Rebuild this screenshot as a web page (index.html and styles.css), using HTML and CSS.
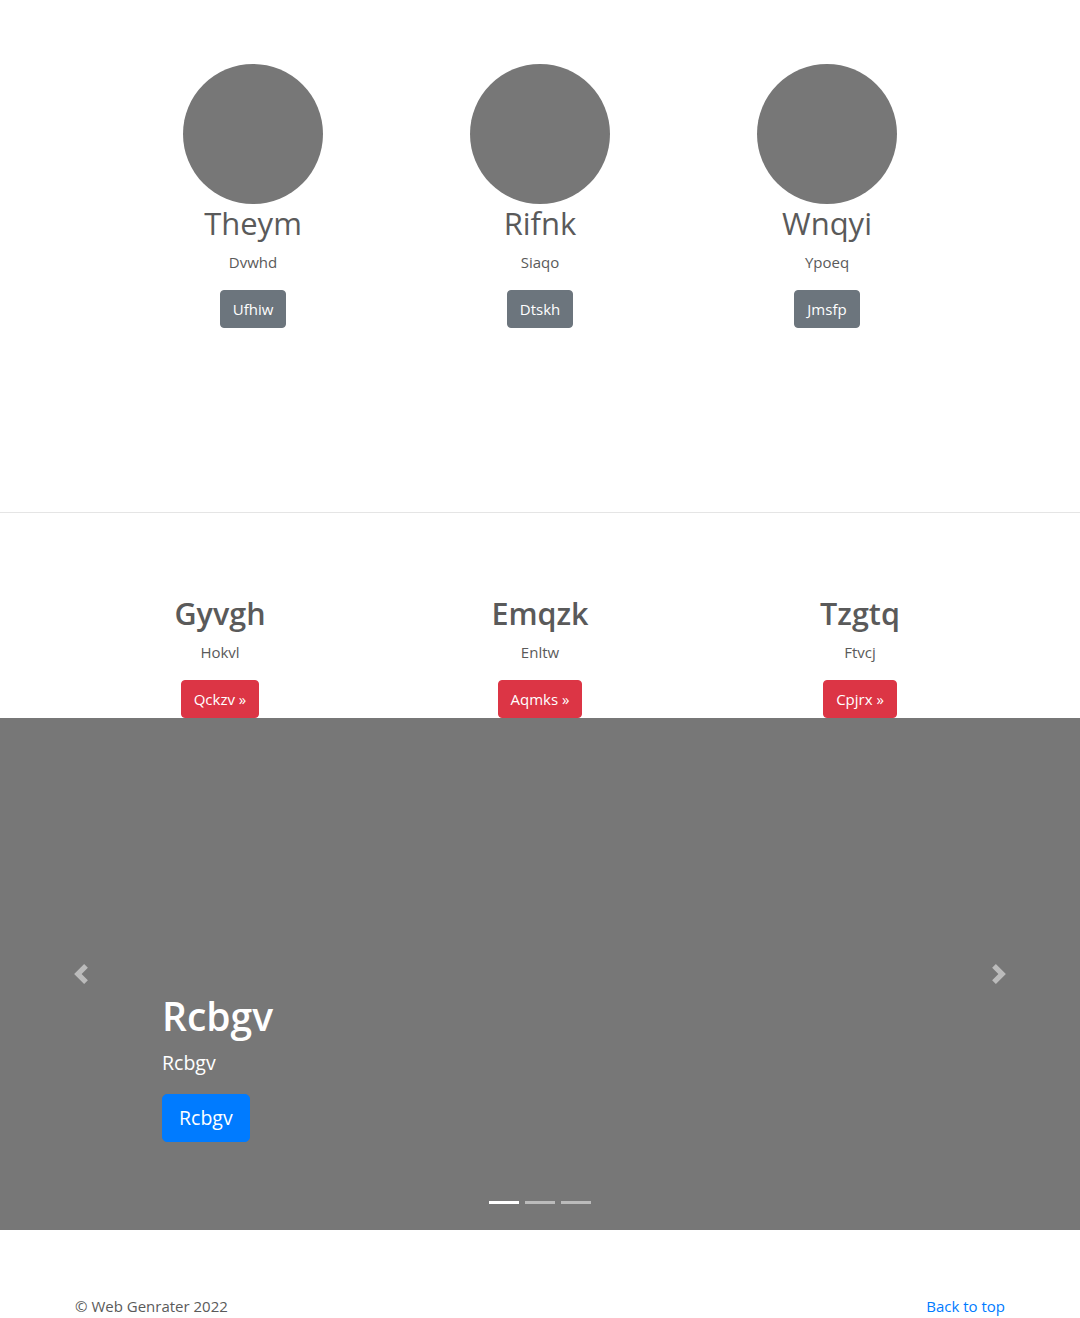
FILE: index.html
```html
<!DOCTYPE html>
<html lang="en">
<head>
<meta charset="utf-8">
<title>Team</title>
<link rel="stylesheet" href="styles.css">
</head>
<body>
<main>
  <section class="team">
    <div class="team-row">
      <div class="member">
        <div class="avatar"></div>
        <h2 class="member-name">Theym</h2>
        <p>Dvwhd</p>
        <p><a class="btn btn-secondary" href="#">Ufhiw</a></p>
      </div>
      <div class="member">
        <div class="avatar"></div>
        <h2 class="member-name">Rifnk</h2>
        <p>Siaqo</p>
        <p><a class="btn btn-secondary" href="#">Dtskh</a></p>
      </div>
      <div class="member">
        <div class="avatar"></div>
        <h2 class="member-name">Wnqyi</h2>
        <p>Ypoeq</p>
        <p><a class="btn btn-secondary" href="#">Jmsfp</a></p>
      </div>
    </div>
  </section>

  <hr class="divider">

  <section class="features">
    <div class="feature">
      <h2 class="feature-title">Gyvgh</h2>
      <p>Hokvl</p>
      <p class="last"><a class="btn btn-danger" href="#">Qckzv &raquo;</a></p>
    </div>
    <div class="feature">
      <h2 class="feature-title">Emqzk</h2>
      <p>Enltw</p>
      <p class="last"><a class="btn btn-danger" href="#">Aqmks &raquo;</a></p>
    </div>
    <div class="feature">
      <h2 class="feature-title">Tzgtq</h2>
      <p>Ftvcj</p>
      <p class="last"><a class="btn btn-danger" href="#">Cpjrx &raquo;</a></p>
    </div>
  </section>

  <div class="carousel">
    <a class="carousel-control prev" href="#">
      <svg class="control-icon" viewBox="0 0 8 8" width="20" height="20"><path fill="#fff" d="M5.25 0l-4 4 4 4 1.5-1.5L4.25 4l2.5-2.5L5.25 0z"/></svg>
    </a>
    <a class="carousel-control next" href="#">
      <svg class="control-icon" viewBox="0 0 8 8" width="20" height="20"><path fill="#fff" d="M2.75 0l-1.5 1.5L3.75 4l-2.5 2.5L2.75 8l4-4-4-4z"/></svg>
    </a>
    <div class="carousel-caption">
      <h1 class="caption-title">Rcbgv</h1>
      <p class="caption-text">Rcbgv</p>
      <p class="caption-action"><a class="btn btn-lg btn-primary" href="#">Rcbgv</a></p>
    </div>
    <ol class="indicators">
      <li class="active"></li>
      <li></li>
      <li></li>
    </ol>
  </div>

  <footer class="footer">
    <p>&copy; Web Genrater 2022</p>
    <p><a class="top-link" href="#">Back to top</a></p>
  </footer>
</main>
</body>
</html>
```

FILE: styles.css
```css
* { box-sizing: border-box; }

body {
  margin: 0;
  font-family: "Segoe UI", "Open Sans", "Noto Sans", sans-serif;
  font-size: 15px;
  line-height: 24px;
  color: #5a5a5a;
  background: #fff;
}

p { margin: 0 0 16px; }

.btn {
  display: inline-block;
  padding: 6px 12px;
  font-size: 15px;
  line-height: 24px;
  border: 1px solid transparent;
  border-radius: 4px;
  color: #fff;
  text-decoration: none;
}
.btn-secondary { background: #6c757d; border-color: #6c757d; }
.btn-danger { background: #dc3545; border-color: #dc3545; }
.btn-primary { background: #007bff; border-color: #007bff; }
.btn-lg { padding: 8px 16px; font-size: 19.5px; line-height: 30px; border-radius: 5px; }

/* team */
.team {
  height: 512px;
  padding-top: 64px;
}
.team-row {
  display: grid;
  grid-template-columns: repeat(3, 287px);
  justify-content: center;
  text-align: center;
}
.avatar {
  width: 140px;
  height: 140px;
  border-radius: 50%;
  background: #777;
  margin: 0 auto;
}
.member-name {
  margin: 0 0 8px;
  padding-top: 1px;
  font-size: 31px;
  line-height: 37px;
  font-weight: 400;
}

.divider {
  margin: 0;
  border: 0;
  border-top: 1px solid rgba(0,0,0,.1);
}

/* features */
.features {
  width: 960px;
  margin: 0 auto;
  padding-top: 81px;
  display: grid;
  grid-template-columns: repeat(3, 1fr);
  text-align: center;
}
.feature-title {
  margin: 0 0 8px;
  font-size: 30.5px;
  line-height: 38px;
  font-weight: 600;
}
.feature .last { margin-bottom: 0; }

/* carousel */
.carousel {
  position: relative;
  height: 512px;
  background: #777;
  margin-bottom: 64px;
}
.carousel-control {
  position: absolute;
  top: 0;
  bottom: 0;
  width: 15%;
  display: flex;
  align-items: center;
  justify-content: center;
  opacity: .5;
}
.carousel-control.prev { left: 0; }
.carousel-control.next { right: 0; }
.control-icon { display: block; }

.carousel-caption {
  position: absolute;
  left: 15%;
  right: 15%;
  bottom: 52px;
  padding: 20px 0;
  color: #fff;
  text-align: left;
}
.caption-title {
  margin: 0 0 8px;
  font-size: 39px;
  line-height: 48px;
  font-weight: 600;
}
.caption-text {
  font-size: 19.5px;
  line-height: 30px;
}

.indicators {
  position: absolute;
  left: 0;
  right: 0;
  bottom: 0;
  margin: 0 0 16px;
  padding: 0;
  list-style: none;
  display: flex;
  justify-content: center;
}
.indicators li {
  width: 30px;
  height: 3px;
  margin: 10px 3px;
  background: #fff;
  opacity: .5;
}
.indicators li.active { opacity: 1; }

/* footer */
.footer {
  width: 960px;
  margin: 0 auto;
  padding: 0 15px;
  display: flex;
  justify-content: space-between;
  color: #5a5a5a;
}
.top-link { color: #007bff; text-decoration: none; }
```
